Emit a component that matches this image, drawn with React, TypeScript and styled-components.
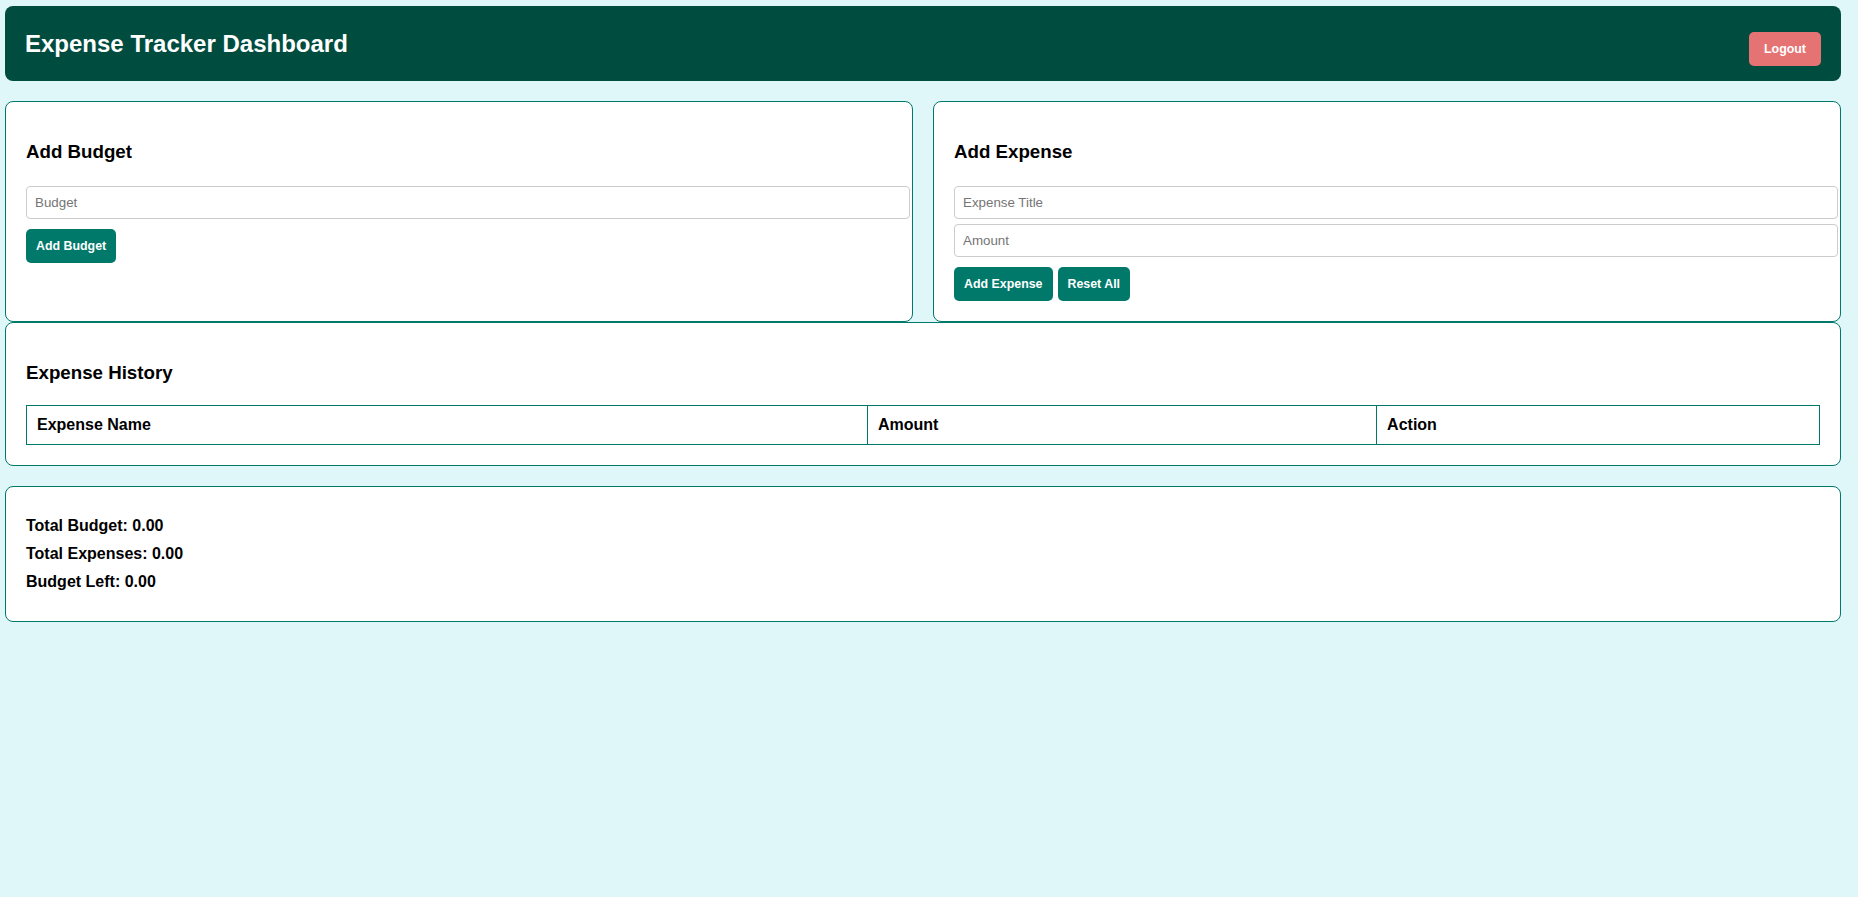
import styled, { createGlobalStyle } from "styled-components";

const GlobalStyle = createGlobalStyle`
  html, body {
    margin: 0;
    padding: 0;
    background-color: #e0f7fa;
    font-family: "Liberation Sans", Arial, sans-serif;
    min-height: 100%;
  }
`;

const Page = styled.div`
  width: 1836px;
  padding: 6px 0 0 5px;
  display: flex;
  flex-direction: column;
`;

const Header = styled.header`
  height: 75px;
  background-color: #004d40;
  border-radius: 8px;
  padding: 0 20px;
  display: flex;
  align-items: center;
  justify-content: space-between;
  margin-bottom: 20px;
`;

const Title = styled.h1`
  margin: 0;
  color: #ffffff;
  font-size: 24px;
  font-weight: bold;
`;

const Button = styled.button<{ $danger?: boolean }>`
  font-family: "Liberation Sans", Arial, sans-serif;
  font-size: 12.4px;
  font-weight: bold;
  color: #ffffff;
  background-color: ${(p) => (p.$danger ? "#e57373" : "#00796b")};
  border: none;
  border-radius: 5px;
  padding: ${(p) => (p.$danger ? "10px 15px" : "10px")};
  cursor: pointer;
  line-height: normal;
`;

const LogoutButton = styled(Button)`
  margin-top: 10px;
`;

const Row = styled.div`
  display: flex;
  gap: 20px;
`;

const Card = styled.section<{ $gapBelow?: boolean }>`
  flex: 1;
  min-width: 0;
  background-color: #ffffff;
  border: 1px solid #00796b;
  border-radius: 8px;
  padding: 20px;
  display: flex;
  flex-direction: column;
  margin-bottom: ${(p) => (p.$gapBelow ? "20px" : "0")};
`;

const CardTitle = styled.h3`
  margin: 18.72px 0;
  font-size: 18.72px;
  font-weight: bold;
  color: #000000;
`;

const Form = styled.div`
  display: flex;
  flex-direction: column;
  align-items: flex-start;
  gap: 5px;
  margin-top: 5px;
`;

const Input = styled.input`
  width: 100%;
  padding: 8px;
  border: 1px solid #cccccc;
  border-radius: 4px;
  font-family: "Liberation Sans", Arial, sans-serif;
  font-size: 13.33px;
  background: #ffffff;
  &::placeholder {
    color: #757575;
  }
`;

const ButtonRow = styled.div`
  display: flex;
  gap: 5px;
  margin-top: 5px;
`;

const Table = styled.table`
  width: 100%;
  border-collapse: collapse;
  margin-top: 2px;
`;

const HeadCell = styled.th<{ $width: string }>`
  width: ${(p) => p.$width};
  border: 1px solid #00796b;
  padding: 10px;
  text-align: left;
  font-size: 16px;
  font-weight: bold;
  color: #000000;
`;

const Summary = styled.div`
  display: block;
`;

const SummaryLine = styled.p`
  margin: 10px 0;
  font-size: 16px;
  font-weight: bold;
  color: #000000;
`;

export default function App() {
  return (
    <>
      <GlobalStyle />
      <Page>
        <Header>
          <Title>Expense Tracker Dashboard</Title>
          <LogoutButton $danger>Logout</LogoutButton>
        </Header>

        <Row>
          <Card>
            <CardTitle>Add Budget</CardTitle>
            <Form>
              <Input placeholder="Budget" />
              <ButtonRow>
                <Button>Add Budget</Button>
              </ButtonRow>
            </Form>
          </Card>
          <Card>
            <CardTitle>Add Expense</CardTitle>
            <Form>
              <Input placeholder="Expense Title" />
              <Input placeholder="Amount" />
              <ButtonRow>
                <Button>Add Expense</Button>
                <Button>Reset All</Button>
              </ButtonRow>
            </Form>
          </Card>
        </Row>

        <Card $gapBelow>
          <CardTitle>Expense History</CardTitle>
          <Table>
            <thead>
              <tr>
                <HeadCell $width="46.9%">Expense Name</HeadCell>
                <HeadCell $width="28.4%">Amount</HeadCell>
                <HeadCell $width="24.7%">Action</HeadCell>
              </tr>
            </thead>
          </Table>
        </Card>

        <Card>
          <Summary>
            <SummaryLine>Total Budget: 0.00</SummaryLine>
            <SummaryLine>Total Expenses: 0.00</SummaryLine>
            <SummaryLine>Budget Left: 0.00</SummaryLine>
          </Summary>
        </Card>
      </Page>
    </>
  );
}
